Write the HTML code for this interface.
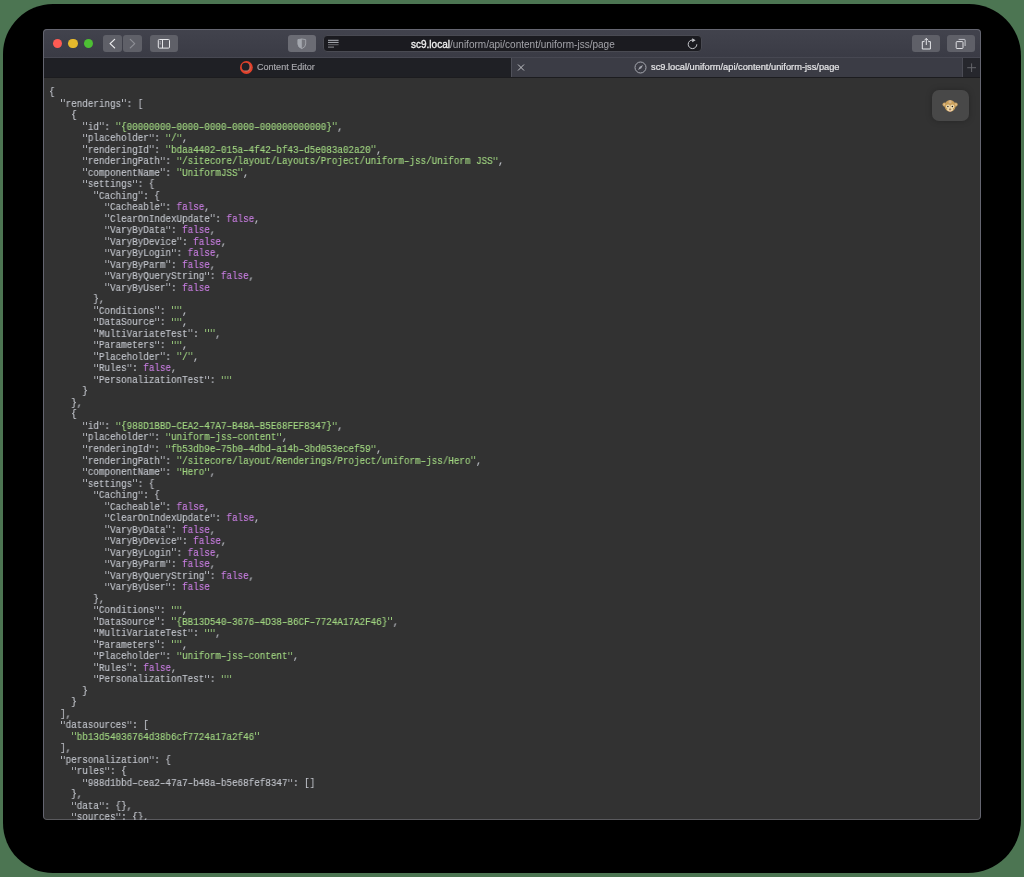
<!DOCTYPE html>
<html><head><meta charset="utf-8">
<style>
*{margin:0;padding:0;box-sizing:border-box}
html,body{width:1024px;height:877px;overflow:hidden;background:#4c7552}
.abs{position:absolute}
#shadow{position:absolute;left:3px;top:4px;width:1018px;height:869px;border-radius:50px 52px 53px 50px;background:#000}
#win{position:absolute;left:43px;top:29px;width:938px;height:791px;border-radius:4px;background:#323232;overflow:hidden}
#toolbar{position:absolute;left:0;top:0;width:938px;height:28px;background:linear-gradient(#42434d,#3a3b45)}
#tline{position:absolute;left:0;top:28px;width:938px;height:1px;background:#474852}
#tabs{position:absolute;left:0;top:29px;width:938px;height:19px;background:#1f2025}
#tab2{position:absolute;left:468px;top:29px;width:452px;height:19px;background:#3b3c45;border-left:1px solid #50515a;border-right:1px solid #4b4c55}
#plus{position:absolute;left:920px;top:29px;width:18px;height:19px;background:#26272d}
#bline{position:absolute;left:0;top:48px;width:938px;height:1px;background:#1c1c1f}
#frame{position:absolute;left:0;top:0;width:938px;height:791px;border:1px solid #646570;border-bottom-color:#5a5a5e;border-radius:4px 4px 4px 4px}
.btn{position:absolute;background:#5f6068;border-radius:3px}
.dot{position:absolute;width:9.5px;height:9.5px;border-radius:50%}
pre{position:absolute;left:6.37px;top:58.25px;transform:scaleX(0.9243);transform-origin:0 0;will-change:transform;font-family:"Liberation Mono",monospace;font-size:10px;line-height:11.515625px;color:#c3c6cd;white-space:pre;-webkit-text-stroke:0.12px currentColor}
pre b{font-weight:normal}
.q{display:inline-block;width:6.0009px;height:3px;position:relative;top:-4.4px;opacity:.92;background:linear-gradient(90deg,transparent 1.3px,currentColor 1.3px,currentColor 2.4px,transparent 2.4px,transparent 3.6px,currentColor 3.6px,currentColor 4.7px,transparent 4.7px)}
b.s{color:#a2d882}
b.f{color:#cb7fe4}
.sans{font-family:"Liberation Sans",sans-serif;will-change:transform}
#ov{position:absolute;left:0;top:0}
</style></head><body>
<div id="shadow"></div>
<div id="win">
  <div id="toolbar"></div>
  <div id="tline"></div>
  <div id="tabs"></div>
  <div id="tab2"></div>
  <div id="plus"></div>
  <div id="bline"></div>
  <div class="dot" style="left:9.65px;top:9.95px;background:#fe5b53"></div>
  <div class="dot" style="left:25.15px;top:9.95px;background:#e6b92c"></div>
  <div class="dot" style="left:40.65px;top:9.95px;background:#4dbf34"></div>
  <div class="btn" style="left:60px;top:6px;width:19px;height:17px"></div>
  <div class="btn" style="left:80px;top:6px;width:19px;height:17px"></div>
  <div class="btn" style="left:107px;top:6px;width:28px;height:17px"></div>
  <div class="btn" style="left:245px;top:6px;width:28px;height:17px;background:#6b6c74"></div>
  <div class="abs" style="left:280px;top:6.1px;width:379px;height:16.5px;background:#1b1b20;border-radius:4px;border:1px solid #494a52"></div>
  <div class="abs sans" style="left:367.6px;top:7.7px;height:15px;line-height:15px;font-size:10.02px;color:#a4a4aa;white-space:pre"><span style="color:#f2f2f2;-webkit-text-stroke:0.3px #f2f2f2">sc9.local</span>/uniform/api/content/uniform-jss/page</div>
  <div class="btn" style="left:869px;top:6px;width:28px;height:17px"></div>
  <div class="btn" style="left:904px;top:6px;width:28px;height:17px"></div>
  <div class="abs sans" style="left:213.5px;top:29.2px;height:19px;line-height:19px;font-size:9.06px;color:#a9a9ae;-webkit-text-stroke:0.15px #a9a9ae">Content Editor</div>
  <div class="abs sans" style="left:607.8px;top:29.3px;height:19px;line-height:19px;font-size:9.28px;color:#e6e6e8;-webkit-text-stroke:0.2px #e6e6e8">sc9.local/uniform/api/content/uniform-jss/page</div>
  <div id="frame"></div>
  <pre>{
  <i class="q"></i>renderings<i class="q"></i>: [
    {
      <i class="q"></i>id<i class="q"></i>: <b class="s"><i class="q"></i>{00000000–0000–0000–0000–000000000000}<i class="q"></i></b>,
      <i class="q"></i>placeholder<i class="q"></i>: <b class="s"><i class="q"></i>/<i class="q"></i></b>,
      <i class="q"></i>renderingId<i class="q"></i>: <b class="s"><i class="q"></i>bdaa4402–015a–4f42–bf43–d5e083a02a20<i class="q"></i></b>,
      <i class="q"></i>renderingPath<i class="q"></i>: <b class="s"><i class="q"></i>/sitecore/layout/Layouts/Project/uniform–jss/Uniform JSS<i class="q"></i></b>,
      <i class="q"></i>componentName<i class="q"></i>: <b class="s"><i class="q"></i>UniformJSS<i class="q"></i></b>,
      <i class="q"></i>settings<i class="q"></i>: {
        <i class="q"></i>Caching<i class="q"></i>: {
          <i class="q"></i>Cacheable<i class="q"></i>: <b class="f">false</b>,
          <i class="q"></i>ClearOnIndexUpdate<i class="q"></i>: <b class="f">false</b>,
          <i class="q"></i>VaryByData<i class="q"></i>: <b class="f">false</b>,
          <i class="q"></i>VaryByDevice<i class="q"></i>: <b class="f">false</b>,
          <i class="q"></i>VaryByLogin<i class="q"></i>: <b class="f">false</b>,
          <i class="q"></i>VaryByParm<i class="q"></i>: <b class="f">false</b>,
          <i class="q"></i>VaryByQueryString<i class="q"></i>: <b class="f">false</b>,
          <i class="q"></i>VaryByUser<i class="q"></i>: <b class="f">false</b>
        },
        <i class="q"></i>Conditions<i class="q"></i>: <b class="s"><i class="q"></i><i class="q"></i></b>,
        <i class="q"></i>DataSource<i class="q"></i>: <b class="s"><i class="q"></i><i class="q"></i></b>,
        <i class="q"></i>MultiVariateTest<i class="q"></i>: <b class="s"><i class="q"></i><i class="q"></i></b>,
        <i class="q"></i>Parameters<i class="q"></i>: <b class="s"><i class="q"></i><i class="q"></i></b>,
        <i class="q"></i>Placeholder<i class="q"></i>: <b class="s"><i class="q"></i>/<i class="q"></i></b>,
        <i class="q"></i>Rules<i class="q"></i>: <b class="f">false</b>,
        <i class="q"></i>PersonalizationTest<i class="q"></i>: <b class="s"><i class="q"></i><i class="q"></i></b>
      }
    },
    {
      <i class="q"></i>id<i class="q"></i>: <b class="s"><i class="q"></i>{988D1BBD–CEA2–47A7–B48A–B5E68FEF8347}<i class="q"></i></b>,
      <i class="q"></i>placeholder<i class="q"></i>: <b class="s"><i class="q"></i>uniform–jss–content<i class="q"></i></b>,
      <i class="q"></i>renderingId<i class="q"></i>: <b class="s"><i class="q"></i>fb53db9e–75b0–4dbd–a14b–3bd053ecef59<i class="q"></i></b>,
      <i class="q"></i>renderingPath<i class="q"></i>: <b class="s"><i class="q"></i>/sitecore/layout/Renderings/Project/uniform–jss/Hero<i class="q"></i></b>,
      <i class="q"></i>componentName<i class="q"></i>: <b class="s"><i class="q"></i>Hero<i class="q"></i></b>,
      <i class="q"></i>settings<i class="q"></i>: {
        <i class="q"></i>Caching<i class="q"></i>: {
          <i class="q"></i>Cacheable<i class="q"></i>: <b class="f">false</b>,
          <i class="q"></i>ClearOnIndexUpdate<i class="q"></i>: <b class="f">false</b>,
          <i class="q"></i>VaryByData<i class="q"></i>: <b class="f">false</b>,
          <i class="q"></i>VaryByDevice<i class="q"></i>: <b class="f">false</b>,
          <i class="q"></i>VaryByLogin<i class="q"></i>: <b class="f">false</b>,
          <i class="q"></i>VaryByParm<i class="q"></i>: <b class="f">false</b>,
          <i class="q"></i>VaryByQueryString<i class="q"></i>: <b class="f">false</b>,
          <i class="q"></i>VaryByUser<i class="q"></i>: <b class="f">false</b>
        },
        <i class="q"></i>Conditions<i class="q"></i>: <b class="s"><i class="q"></i><i class="q"></i></b>,
        <i class="q"></i>DataSource<i class="q"></i>: <b class="s"><i class="q"></i>{BB13D540–3676–4D38–B6CF–7724A17A2F46}<i class="q"></i></b>,
        <i class="q"></i>MultiVariateTest<i class="q"></i>: <b class="s"><i class="q"></i><i class="q"></i></b>,
        <i class="q"></i>Parameters<i class="q"></i>: <b class="s"><i class="q"></i><i class="q"></i></b>,
        <i class="q"></i>Placeholder<i class="q"></i>: <b class="s"><i class="q"></i>uniform–jss–content<i class="q"></i></b>,
        <i class="q"></i>Rules<i class="q"></i>: <b class="f">false</b>,
        <i class="q"></i>PersonalizationTest<i class="q"></i>: <b class="s"><i class="q"></i><i class="q"></i></b>
      }
    }
  ],
  <i class="q"></i>datasources<i class="q"></i>: [
    <b class="s"><i class="q"></i>bb13d54036764d38b6cf7724a17a2f46<i class="q"></i></b>
  ],
  <i class="q"></i>personalization<i class="q"></i>: {
    <i class="q"></i>rules<i class="q"></i>: {
      <i class="q"></i>988d1bbd–cea2–47a7–b48a–b5e68fef8347<i class="q"></i>: []
    },
    <i class="q"></i>data<i class="q"></i>: {},
    <i class="q"></i>sources<i class="q"></i>: {},</pre>
  <div class="abs" style="left:889px;top:61px;width:37px;height:31px;border-radius:7px;background:#484848;box-shadow:0 0 6px rgba(0,0,0,.25)"></div>
</div>
<svg id="ov" width="1024" height="877" viewBox="0 0 1024 877" fill="none">
  <!-- back / forward -->
  <path d="M114.6 39.4 L110.1 43.6 L114.6 47.9" stroke="#ececee" stroke-width="1.25" stroke-linecap="round" stroke-linejoin="round"/>
  <path d="M130.3 39.4 L134.7 43.6 L130.3 47.9" stroke="#8d8e95" stroke-width="1.25" stroke-linecap="round" stroke-linejoin="round"/>
  <!-- sidebar -->
  <rect x="158.3" y="39.5" width="11.2" height="8.6" rx="1" stroke="#e6e7ea" stroke-width="1"/>
  <path d="M162.5 39.5 V48.1" stroke="#e6e7ea" stroke-width="1"/>
  <rect x="159.7" y="41.5" width="1.1" height="0.9" fill="#c9cad0"/>
  <rect x="159.7" y="43.4" width="1.1" height="0.9" fill="#c9cad0"/>
  <!-- shield -->
  <path d="M297.9 39.6 Q301.8 38.4 305.7 39.6 V44 Q305.7 47.2 301.8 48.7 Q297.9 47.2 297.9 44 Z" stroke="#a4a7ae" stroke-width="0.9" fill="#74757c"/>
  <path d="M301.8 38.7 V48.6 Q297.9 47.2 297.9 44 V39.6 Q299.8 39 301.8 38.7 Z" fill="#a4a7ae"/>
  <!-- reader -->
  <path d="M328 40.3 H338.6 M328 42.4 H338.6" stroke="#c3c6cd" stroke-width="0.9"/>
  <path d="M328 44.7 H338.6" stroke="#707176" stroke-width="0.9"/>
  <path d="M328 47.1 H334" stroke="#9a9ba0" stroke-width="0.9"/>
  <!-- reload -->
  <path d="M692.5 40 A4.3 4.3 0 1 0 696.8 44.3" stroke="#c8c9cd" stroke-width="1"/>
  <path d="M692.2 38.2 L695.6 40.2 L692.2 42.3 Z" fill="#c8c9cd"/>
  <!-- share -->
  <path d="M924.5 41.6 H922.3 V49 H930.4 V41.6 H928.2" stroke="#e6e7ea" stroke-width="1"/>
  <path d="M926.3 38.6 V45" stroke="#e6e7ea" stroke-width="1"/>
  <path d="M924.4 40.4 L926.3 38.3 L928.2 40.4" stroke="#e6e7ea" stroke-width="1" stroke-linejoin="round"/>
  <!-- tabs -->
  <rect x="956.2" y="41.6" width="6.8" height="6.9" rx="0.8" stroke="#e6e7ea" stroke-width="0.95"/>
  <path d="M958.6 39.4 H964.5 A0.6 0.6 0 0 1 965.1 40 V46" stroke="#d4d5da" stroke-width="0.9"/>
  <!-- tab: sitecore -->
  <circle cx="246.4" cy="67.5" r="6.4" fill="#e3412b"/>
  <circle cx="246.4" cy="67.5" r="4.4" fill="#c86a5a"/>
  <circle cx="245.6" cy="66.7" r="3.9" fill="#1f2025"/>
  <!-- close x -->
  <path d="M518 64.5 L524 70.5 M524 64.5 L518 70.5" stroke="#c3c3c7" stroke-width="1"/>
  <!-- compass -->
  <circle cx="640.5" cy="67.5" r="5.5" stroke="#a8aab2" stroke-width="1"/>
  <path d="M643 65.1 L641.3 68.3 L638 69.9 L639.7 66.7 Z" fill="#a8aab2"/>
  <!-- plus -->
  <path d="M967.2 67.7 H976 M971.6 63.4 V72" stroke="#6a6b71" stroke-width="0.9"/>
  <!-- monkey -->
  <circle cx="944.6" cy="104.6" r="2.1" fill="#c9a05c"/>
  <circle cx="955.6" cy="104.6" r="2.1" fill="#c9a05c"/>
  <circle cx="944.6" cy="104.6" r="1.1" fill="#e6c8a0"/>
  <circle cx="955.6" cy="104.6" r="1.1" fill="#e6c8a0"/>
  <ellipse cx="950.1" cy="105.8" rx="5.6" ry="5.9" fill="#c9a05c"/>
  <circle cx="948" cy="106.5" r="2" fill="#f1dbae"/>
  <circle cx="952.3" cy="106.5" r="2" fill="#f1dbae"/>
  <ellipse cx="950.1" cy="109.3" rx="2.9" ry="2.1" fill="#f1dbae"/>
  <circle cx="947.9" cy="106.5" r="0.75" fill="#2a2a2a"/>
  <circle cx="952.4" cy="106.5" r="0.75" fill="#1a1a1a"/>
  <ellipse cx="950.1" cy="109.2" rx="1.3" ry="0.6" fill="#8a6a40"/>
  <ellipse cx="950.1" cy="110.8" rx="1" ry="0.6" fill="#d89a8a"/>
  <circle cx="950.1" cy="101.8" r="1.6" fill="#d6b58a"/>
</svg>
</body></html>
